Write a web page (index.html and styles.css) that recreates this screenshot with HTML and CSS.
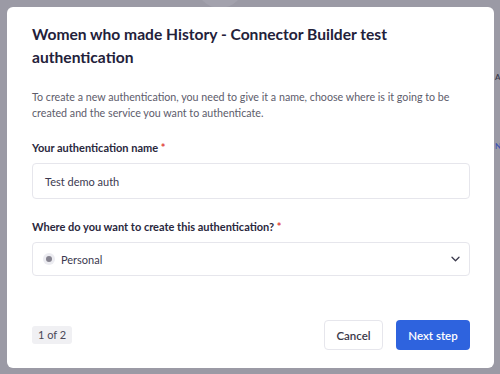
FILE: index.html
```html
<!DOCTYPE html>
<html lang="en">
<head>
    <meta charset="UTF-8">
    <meta name="viewport" content="width=device-width, initial-scale=1.0">
    <title>New authentication</title>
    <link rel="stylesheet" href="styles.css">
</head>
<body>
    <div class="backdrop">
        <span class="bg-circle"></span>
        <span class="bg-letter bg-a">A</span>
        <span class="bg-letter bg-n">N</span>
    </div>
    <div class="modal">
        <h1 class="modal-title">Women who made History - Connector Builder test authentication</h1>
        <p class="modal-desc">To create a new authentication, you need to give it a name, choose where is it going to be created and the service you want to authenticate.</p>

        <label class="field-label">Your authentication name <span class="req">*</span></label>
        <div class="input">Test demo auth</div>

        <label class="field-label">Where do you want to create this authentication? <span class="req">*</span></label>
        <div class="input select">
            <span class="dot"></span>
            <span class="select-text">Personal</span>
            <svg class="chevron" width="9" height="6" viewBox="0 0 9 6">
                <path d="M1 1.2l3.5 3.5 3.5-3.5" fill="none" stroke="#3b3a4d" stroke-width="1.3" stroke-linecap="round" stroke-linejoin="round"/>
            </svg>
        </div>

        <div class="modal-footer">
            <span class="step">1 of 2</span>
            <div class="actions">
                <button class="btn btn-secondary">Cancel</button>
                <button class="btn btn-primary">Next step</button>
            </div>
        </div>
    </div>
</body>
</html>
```

FILE: styles.css
```css
body {
    margin: 0;
    padding: 7px 6px 6px 7px;
    background: #9b9aa5;
    font-family: 'Lato', 'Noto Sans', sans-serif;
    color: #272538;
    overflow: hidden;
}

.backdrop {
    position: absolute;
    top: 0;
    left: 0;
    width: 500px;
    height: 374px;
    z-index: 0;
    overflow: hidden;
}

.bg-circle {
    position: absolute;
    left: 196px;
    top: -40px;
    width: 48px;
    height: 48px;
    border-radius: 50%;
    background: #a3a2ad;
}

.bg-letter {
    position: absolute;
    left: 495px;
    font-size: 8px;
    font-weight: 600;
}

.bg-a { top: 72px; color: #3c3b4a; }
.bg-n { top: 141px; color: #3f55b0; }

.modal {
    position: relative;
    z-index: 1;
    box-sizing: border-box;
    width: 487px;
    height: 361px;
    background: #fff;
    border-radius: 6px;
    padding: 16px 24px 18px 25px;
    display: flex;
    flex-direction: column;
}

.modal-title {
    margin: 0;
    font-size: 15.6px;
    line-height: 23px;
    font-weight: 700;
    color: #23213a;
}

.modal-desc {
    margin: 20px 0 0;
    font-size: 10.7px;
    line-height: 16px;
    color: #5d5c6b;
}

.field-label {
    display: block;
    margin-top: 19px;
    font-size: 11px;
    line-height: 16px;
    font-weight: 700;
    color: #2a283d;
}

.field-label + .input + .field-label {
    margin-top: 20px;
}

.req {
    color: #e0413a;
}

.input {
    box-sizing: border-box;
    margin-top: 7px;
    height: 36px;
    border: 1px solid #e6e6ec;
    border-radius: 4px;
    padding: 0 12px;
    display: flex;
    align-items: center;
    font-size: 11px;
    color: #3b3950;
}

.select {
    height: 34px;
    padding: 0 9px 0 10px;
}

.dot {
    width: 12px;
    height: 12px;
    border-radius: 50%;
    background: #ececf1;
    display: flex;
    align-items: center;
    justify-content: center;
    margin-right: 6px;
}

.dot::after {
    content: "";
    width: 6px;
    height: 6px;
    border-radius: 50%;
    background: #85838f;
}

.select-text {
    flex: 1;
}

.modal-footer {
    margin-top: auto;
    display: flex;
    align-items: center;
    justify-content: space-between;
}

.step {
    background: #f0f0f3;
    border-radius: 3px;
    padding: 2px 6px;
    font-size: 11px;
    line-height: 14px;
    color: #4a4858;
}

.actions {
    display: flex;
    gap: 13px;
}

.btn {
    height: 30px;
    border-radius: 4px;
    font-family: inherit;
    font-size: 11.5px;
    font-weight: 600;
    cursor: pointer;
}

.btn-secondary {
    width: 59px;
    background: #fff;
    border: 1px solid #e6e6ec;
    color: #3a3848;
}

.btn-primary {
    width: 74px;
    background: #2e63de;
    border: none;
    color: #fff;
}
```
